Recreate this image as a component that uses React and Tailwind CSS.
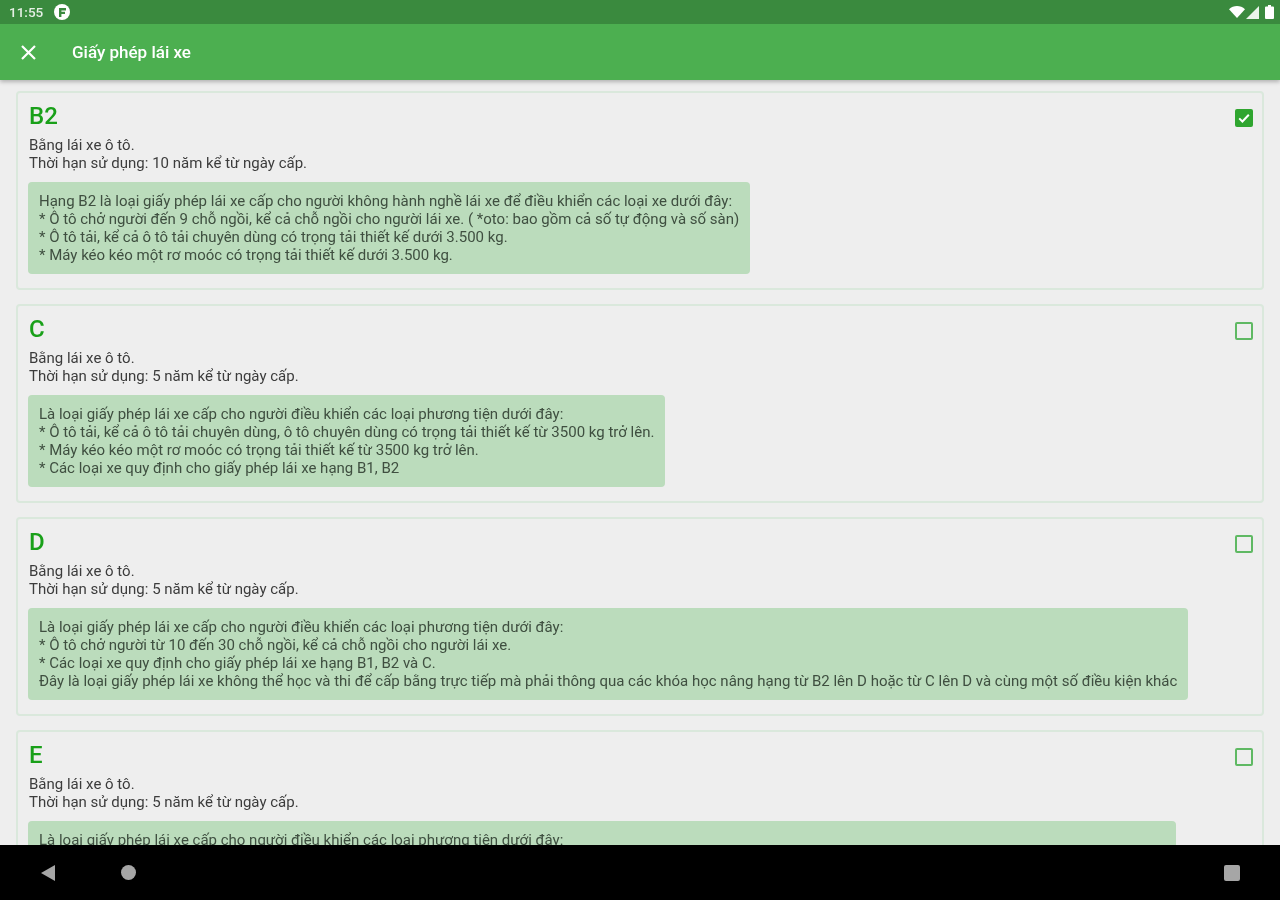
const cards = [
  {
    title: "B2",
    checked: true,
    years: "10",
    lines: [
      "Hạng B2 là loại giấy phép lái xe cấp cho người không hành nghề lái xe để điều khiển các loại xe dưới đây:",
      "* Ô tô chở người đến 9 chỗ ngồi, kể cả chỗ ngồi cho người lái xe. ( *oto: bao gồm cả số tự động và số sàn)",
      "* Ô tô tải, kể cả ô tô tải chuyên dùng có trọng tải thiết kế dưới 3.500 kg.",
      "* Máy kéo kéo một rơ moóc có trọng tải thiết kế dưới 3.500 kg.",
    ],
  },
  {
    title: "C",
    years: "5",
    lines: [
      "Là loại giấy phép lái xe cấp cho người điều khiển các loại phương tiện dưới đây:",
      "* Ô tô tải, kể cả ô tô tải chuyên dùng, ô tô chuyên dùng có trọng tải thiết kế từ 3500 kg trở lên.",
      "* Máy kéo kéo một rơ moóc có trọng tải thiết kế từ 3500 kg trở lên.",
      "* Các loại xe quy định cho giấy phép lái xe hạng B1, B2",
    ],
  },
  {
    title: "D",
    years: "5",
    lines: [
      "Là loại giấy phép lái xe cấp cho người điều khiển các loại phương tiện dưới đây:",
      "* Ô tô chở người từ 10 đến 30 chỗ ngồi, kể cả chỗ ngồi cho người lái xe.",
      "* Các loại xe quy định cho giấy phép lái xe hạng B1, B2 và C.",
      "Đây là loại giấy phép lái xe không thể học và thi để cấp bằng trực tiếp mà phải thông qua các khóa học nâng hạng từ B2 lên D hoặc từ C lên D và cùng một số điều kiện khác",
    ],
  },
  {
    title: "E",
    years: "5",
    wide: true,
    lines: [
      "Là loại giấy phép lái xe cấp cho người điều khiển các loại phương tiện dưới đây:",
      "* Ô tô chở người trên 30 chỗ ngồi.",
      "* Các loại xe quy định cho giấy phép lái xe hạng B1, B2, C và D.",
      "Đây là loại giấy phép lái xe không thể học và thi để cấp bằng trực tiếp.",
    ],
  },
];

function Card({ c }) {
  return (
    <section className="relative h-[199px] shrink-0 rounded-[4px] border-2 border-[#dae8dc] px-[10px] pt-[8px]">
      <h2 className="h-[30px] pl-px text-[24px] leading-[30px] font-medium text-[#19a019]">{c.title}</h2>
      <div className="mt-[5px] pl-px text-[15px] leading-[18px] text-[#3c3c3c]">
        <p>Bằng lái xe ô tô.</p>
        <p>Thời hạn sử dụng: {c.years} năm kể từ ngày cấp.</p>
      </div>
      <div className={`mt-[10px] h-[92px] rounded-[4px] bg-[#bbdcbc] px-[11px] py-[10px] text-[15px] leading-[18px] whitespace-nowrap text-[#3f4f40] ${c.wide ? "w-[1148px]" : "w-fit"}`}>
        {c.lines.map((l, i) => (
          <p key={i}>{l}</p>
        ))}
      </div>
      {c.checked ? (
        <div className="absolute top-[16px] right-[9px] flex h-[18px] w-[18px] items-center justify-center rounded-[2px] bg-[#2fa52f]">
          <svg width="14" height="14" viewBox="0 0 14 14" fill="none" stroke="#ffffff" strokeWidth="2">
            <path d="M2.2 7.4 5.4 10.5 11.800 3.800" />
          </svg>
        </div>
      ) : (
        <div className="absolute top-[16px] right-[9px] h-[18px] w-[18px] rounded-[2px] border-2 border-[#5fb963]" />
      )}
    </section>
  );
}

export default function App() {
  return (
    <div className="flex h-[900px] w-[1280px] flex-col overflow-hidden bg-[#eeeeee] font-['Roboto',sans-serif] blur-[0.6px]">
      <header className="relative z-10 shadow-[0_2px_4px_rgba(0,0,0,0.25)]">
        <div className="flex h-6 items-center bg-[#3a8a3e] pr-[6px] pl-[9px] text-white">
          <span className="text-[13.5px] font-medium text-[#e6f0e6]">11:55</span>
          <span className="ml-[11px] flex h-[16px] w-[16px] items-center justify-center rounded-full bg-white">
            <svg width="9" height="9" viewBox="0 0 9 9" fill="#3a8a3e">
              <path d="M1 0h7v2.400H3.400v1.400H7v2.200H3.400V9H1z" />
            </svg>
          </span>
          <span className="ml-auto flex items-center">
            <svg width="16" height="12" viewBox="0 0 16 12" fill="#ffffff">
              <path d="M0 3.200C4.500-1 11.500-1 16 3.200L8 12z" />
            </svg>
            <svg className="ml-px" width="13" height="13" viewBox="0 0 13 13" fill="#ffffff">
              <path d="M13 0v13H0z" opacity="0.9" />
            </svg>
            <svg className="ml-[6px]" width="9" height="14" viewBox="0 0 9 14" fill="#ffffff">
              <path d="M3 0h3v1.500h2a1 1 0 0 1 1 1V13a1 1 0 0 1-1 1H1a1 1 0 0 1-1-1V2.500a1 1 0 0 1 1-1h2z" />
            </svg>
          </span>
        </div>
        <div className="flex h-14 items-center bg-[#4caf50] text-white">
          <svg className="ml-[20px]" width="17" height="17" viewBox="0 0 17 17" fill="none" stroke="#ffffff" strokeWidth="2.200">
            <path d="M2 2 15 15M15 2 2 15" />
          </svg>
          <h1 className="mt-px ml-[35px] text-[17px] font-medium">Giấy phép lái xe</h1>
        </div>
      </header>
      <main className="flex min-h-0 flex-1 flex-col gap-[14px] overflow-hidden px-4 pt-[11px]">
        {cards.map((c) => (
          <Card key={c.title} c={c} />
        ))}
      </main>
      <nav className="relative z-10 flex h-[55px] shrink-0 items-center bg-black pr-[40px] pl-[40px]">
        <svg width="16" height="16" viewBox="0 0 16 16" fill="#a6a6a6">
          <path d="M15 0v16L1 8z" />
        </svg>
        <span className="ml-[65px] h-[15px] w-[15px] rounded-full bg-[#a6a6a6]" />
        <span className="ml-auto h-[16px] w-[16px] rounded-[2px] bg-[#a6a6a6]" />
      </nav>
    </div>
  );
}
